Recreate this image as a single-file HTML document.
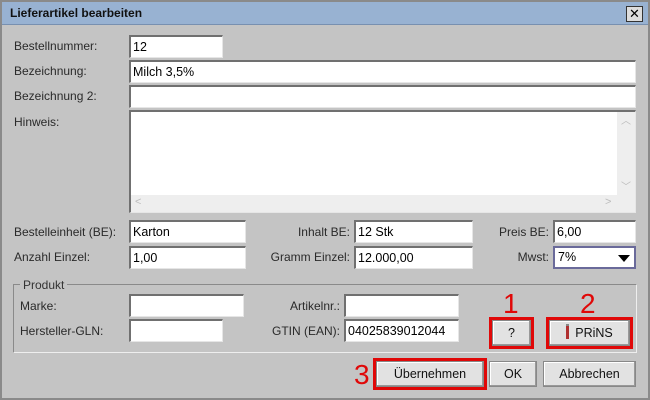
<!DOCTYPE html><html><head><style>
body{margin:0;width:650px;height:400px;overflow:hidden;background:#fff;font-family:"Liberation Sans",Arial,sans-serif;font-size:12px;color:#2a2a2a}
.win{position:absolute;left:0;top:0;width:646px;height:396px;background:#c4c4c4;border:2px solid #8a8a8a}
.t{position:absolute;left:0;top:0;width:646px;height:22px;background:#98b2d2;border-bottom:1px solid #7890b0}
.t b{position:absolute;left:8px;top:4px;font-size:12px;color:#111}
.x{position:absolute;left:624px;top:4px;width:15px;height:14px;background:#ddd;border:1px solid #333;font-size:13px;line-height:13px;text-align:center;color:#000}
.a{position:absolute}
.l{position:absolute;white-space:nowrap}
.r{text-align:right}
.i{position:absolute;background:#fff;border-top:2px solid #707070;border-left:2px solid #707070;border-right:1px solid #e6e6e6;border-bottom:1px solid #e6e6e6;box-sizing:border-box;padding:2px 2px;font-size:12.5px;color:#000;line-height:16px}
.btn{position:absolute;background:#e2e2e2;border:1px solid #888;box-sizing:border-box;text-align:center;line-height:24px;font-size:12.5px;color:#111;box-shadow:inset -1px -1px #999,inset 1px 1px #fff}
.red{position:absolute;border:3px solid #e00808;box-sizing:border-box}
.n{position:absolute;color:#e00808;font-size:28px;line-height:28px}
</style></head><body><div class="win">
<div class="t"><b>Lieferartikel bearbeiten</b><div class="x">✕</div></div>
</div>
<div class="l" style="left:14px;top:39px">Bestellnummer:</div>
<div class="i" style="left:129px;top:35px;width:94px;height:23px">12</div>
<div class="l" style="left:14px;top:64px">Bezeichnung:</div>
<div class="i" style="left:129px;top:60px;width:507px;height:23px">Milch 3,5%</div>
<div class="l" style="left:14px;top:89px">Bezeichnung 2:</div>
<div class="i" style="left:129px;top:85px;width:507px;height:23px"></div>
<div class="l" style="left:14px;top:115px">Hinweis:</div>
<div class="i" style="left:129px;top:110px;width:507px;height:103px"></div>
<div class="a" style="left:617px;top:112px;width:18px;height:83px;background:#eee;color:#bbb;font-size:10px;text-align:center">︿<div style="position:absolute;top:66px;width:18px">﹀</div></div>
<div class="a" style="left:131px;top:195px;width:504px;height:17px;background:#eee;color:#bbb;font-size:11px"><span style="position:absolute;left:4px;top:1px">&lt;</span><span style="position:absolute;left:474px;top:1px">&gt;</span></div>
<div class="l" style="left:14px;top:225px">Bestelleinheit (BE):</div>
<div class="i" style="left:129px;top:220px;width:117px;height:23px">Karton</div>
<div class="l r" style="left:250px;width:100px;top:225px">Inhalt BE:</div>
<div class="i" style="left:354px;top:220px;width:119px;height:23px">12 Stk</div>
<div class="l r" style="left:470px;width:79px;top:225px">Preis BE:</div>
<div class="i" style="left:553px;top:220px;width:83px;height:23px">6,00</div>
<div class="l" style="left:14px;top:250px">Anzahl Einzel:</div>
<div class="i" style="left:129px;top:246px;width:117px;height:23px">1,00</div>
<div class="l r" style="left:250px;width:100px;top:250px">Gramm Einzel:</div>
<div class="i" style="left:354px;top:246px;width:119px;height:23px">12.000,00</div>
<div class="l r" style="left:470px;width:79px;top:250px">Mwst:</div>
<div class="a" style="left:553px;top:246px;width:83px;height:23px;background:#fff;border:2px solid #6a6a9a;box-sizing:border-box;padding:2px 3px;font-size:12.5px;color:#000">7%<span style="position:absolute;right:4px;top:7px;border-left:6px solid transparent;border-right:6px solid transparent;border-top:7px solid #000"></span></div>
<div class="a" style="left:13px;top:284px;width:624px;height:69px;border:1px solid #8a8a8a;border-right-color:#eee;border-bottom-color:#eee;box-sizing:border-box"></div>
<div class="l" style="left:20px;top:278px;background:#c4c4c4;padding:0 3px;color:#333">Produkt</div>
<div class="l" style="left:20px;top:299px">Marke:</div>
<div class="i" style="left:129px;top:294px;width:115px;height:23px"></div>
<div class="l r" style="left:240px;width:100px;top:299px">Artikelnr.:</div>
<div class="i" style="left:344px;top:294px;width:115px;height:23px"></div>
<div class="l" style="left:20px;top:324px">Hersteller-GLN:</div>
<div class="i" style="left:129px;top:319px;width:94px;height:23px"></div>
<div class="l r" style="left:240px;width:100px;top:324px">GTIN (EAN):</div>
<div class="i" style="left:344px;top:319px;width:115px;height:23px">04025839012044</div>
<div class="n" style="left:503px;top:290px">1</div>
<div class="btn" style="left:492px;top:320px;width:39px;height:26px">?</div>
<div class="red" style="left:489px;top:317px;width:45px;height:32px"></div>
<div class="n" style="left:580px;top:290px">2</div>
<div class="btn" style="left:549px;top:320px;width:81px;height:26px"><span style="display:inline-block;width:3px;height:13px;background:#b03030;vertical-align:-2px;margin-right:6px;border-top:2px solid #888"></span>PRiNS</div>
<div class="red" style="left:546px;top:317px;width:87px;height:32px"></div>
<div class="n" style="left:354px;top:361px">3</div>
<div class="btn" style="left:376px;top:361px;width:108px;height:26px">Übernehmen</div>
<div class="red" style="left:373px;top:358px;width:114px;height:32px"></div>
<div class="btn" style="left:489px;top:361px;width:48px;height:26px">OK</div>
<div class="btn" style="left:543px;top:361px;width:93px;height:26px">Abbrechen</div>
</body></html>
